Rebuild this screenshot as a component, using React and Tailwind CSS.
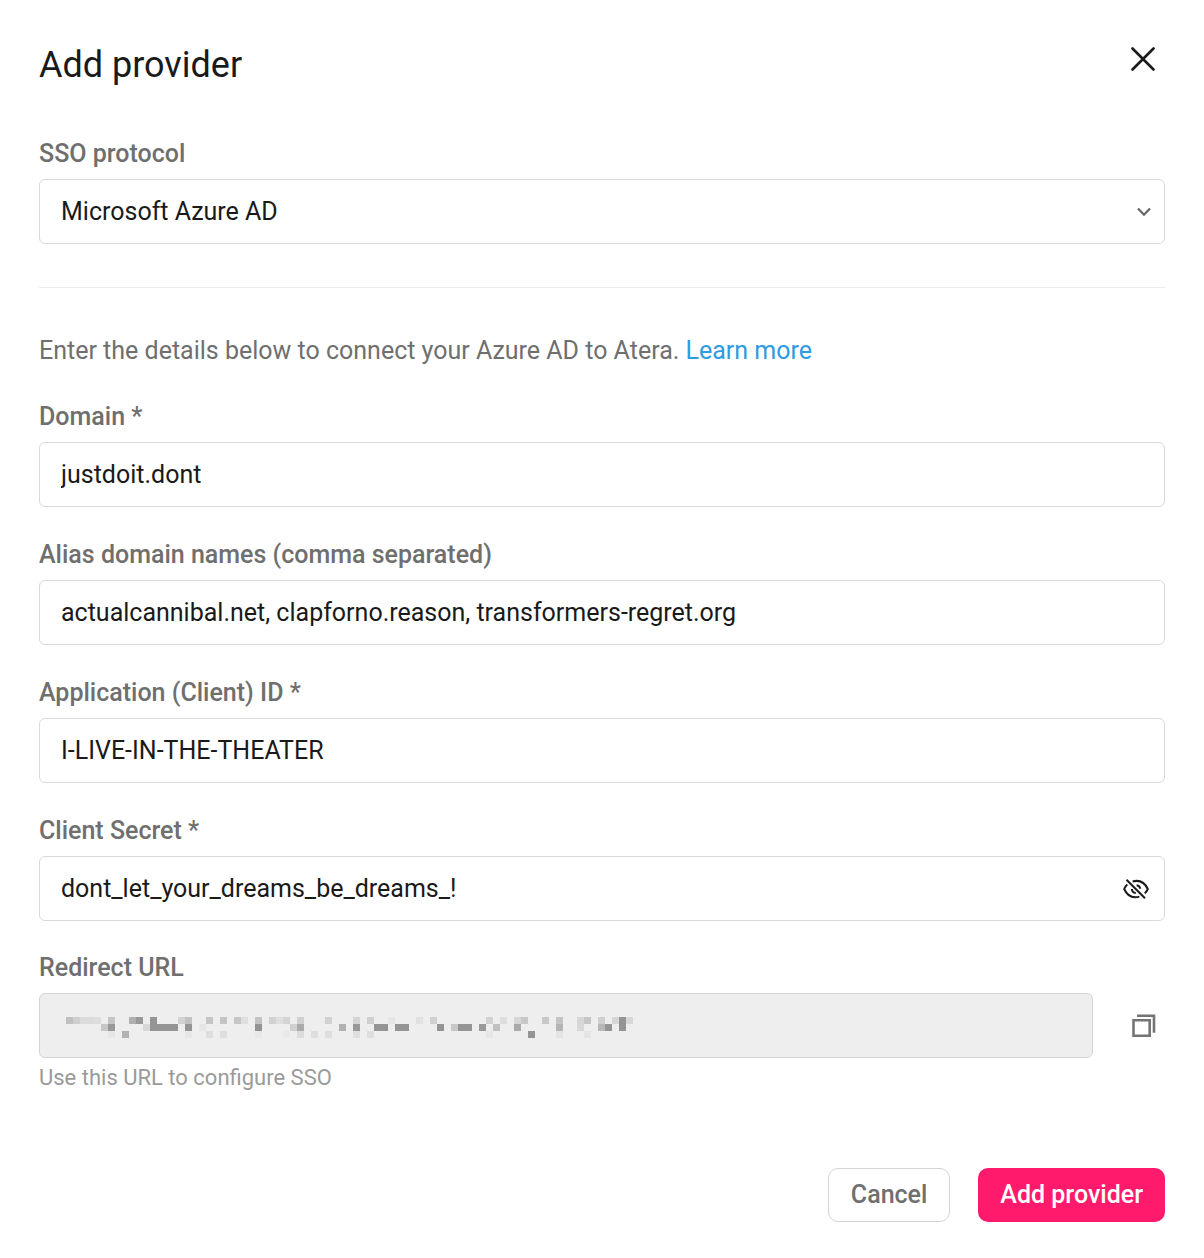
import { useState } from 'react';

const inputClass =
  'block h-[65px] w-full rounded-md border border-[#d9d9d9] bg-white px-[21px] text-[25px] text-[#1a1a1a] outline-none';

// Redacted value: [column, row, span, color], one cell is 7px
const MASK = [
  [0, 0, 1, '#c0c0c0'], [1, 0, 1, '#cfcfcf'], [2, 0, 2, '#dbdbdb'], [4, 0, 1, '#dedede'],
  [6, 0, 1, '#c5c5c5'], [9, 0, 1, '#b0b0b0'], [10, 0, 1, '#999999'], [12, 0, 1, '#949494'],
  [16, 0, 1, '#d2d2d2'], [17, 0, 1, '#c1c1c1'], [20, 0, 1, '#c5c5c5'], [22, 0, 1, '#c4c4c4'],
  [24, 0, 1, '#c6c6c6'], [25, 0, 1, '#dedede'], [27, 0, 1, '#c4c4c4'], [29, 0, 1, '#d2d2d2'],
  [30, 0, 1, '#dedede'], [31, 0, 1, '#d4d4d4'], [33, 0, 1, '#d0d0d0'], [37, 0, 1, '#d2d2d2'],
  [41, 0, 1, '#d4d4d4'], [43, 0, 1, '#cfcfcf'], [46, 0, 1, '#e6e6e6'], [50, 0, 1, '#e2e2e2'],
  [52, 0, 1, '#d0d0d0'], [60, 0, 1, '#d2d2d2'], [62, 0, 1, '#dedede'], [64, 0, 1, '#d6d6d6'],
  [65, 0, 1, '#c8c8c8'], [68, 0, 1, '#c8c8c8'], [70, 0, 1, '#c4c4c4'], [73, 0, 1, '#d6d6d6'],
  [74, 0, 1, '#c6c6c6'], [76, 0, 1, '#cfcfcf'], [78, 0, 1, '#d6d6d6'], [79, 0, 1, '#949494'],
  [80, 0, 1, '#d8d8d8'],
  [5, 1, 1, '#c6c6c6'], [6, 1, 1, '#999999'], [11, 1, 1, '#d8d8d8'], [12, 1, 4, '#949494'],
  [17, 1, 1, '#949494'], [19, 1, 1, '#e6e6e6'], [27, 1, 1, '#949494'], [32, 1, 1, '#d0d0d0'],
  [33, 1, 1, '#aaaaaa'], [39, 1, 1, '#b0b0b0'], [41, 1, 1, '#999999'], [44, 1, 2, '#949494'],
  [47, 1, 2, '#949494'], [53, 1, 1, '#949494'], [55, 1, 1, '#c8c8c8'], [56, 1, 2, '#949494'],
  [59, 1, 1, '#999999'], [61, 1, 1, '#c0c0c0'], [64, 1, 1, '#aaaaaa'], [70, 1, 1, '#b4b4b4'],
  [73, 1, 1, '#d8d8d8'], [76, 1, 1, '#b8b8b8'], [77, 1, 1, '#949494'], [79, 1, 1, '#949494'],
  [6, 2, 1, '#e6e6e6'], [8, 2, 1, '#b2b2b2'], [17, 2, 1, '#e6e6e6'], [20, 2, 1, '#dedede'],
  [22, 2, 1, '#dedede'], [27, 2, 1, '#e8e8e8'], [31, 2, 1, '#e9e9e9'], [33, 2, 1, '#dcdcdc'],
  [35, 2, 1, '#dedede'], [37, 2, 1, '#dedede'], [41, 2, 1, '#dedede'], [43, 2, 1, '#dedede'],
  [60, 2, 1, '#e6e6e6'], [66, 2, 1, '#949494'], [70, 2, 1, '#e4e4e4'], [74, 2, 1, '#e4e4e4'],
];

function Field({ id, label, children }) {
  return (
    <div>
      <label htmlFor={id} className="mb-[9px] block text-[25px] leading-8 font-medium text-[#6f6f6f]">
        {label}
      </label>
      {children}
    </div>
  );
}

function TextField({ id, label, value }) {
  return (
    <Field id={id} label={label}>
      <input id={id} type="text" defaultValue={value} className={inputClass} />
    </Field>
  );
}

function CloseIcon() {
  return (
    <svg width="24" height="24" viewBox="0 0 24 24" fill="none" stroke="#1a1a1a" strokeWidth="2.6" strokeLinecap="round">
      <path d="M1.5 1.5 22.5 22.5M22.5 1.5 1.5 22.5" />
    </svg>
  );
}

function ChevronIcon() {
  return (
    <svg width="14" height="10" viewBox="0 0 14 10" fill="none" stroke="#666" strokeWidth="2.2">
      <path d="M1 1.5 7 7.7 13 1.5" />
    </svg>
  );
}

function EyeOffIcon() {
  return (
    <svg width="26" height="20" viewBox="0 0 26 20" fill="none" stroke="#1a1a1a" strokeWidth="2">
      <path d="M3.5 .8 22 19.2" />
      <path d="M9.6 2.5C16.5.6 21.7 3.4 24.8 10c-.8 1.8-1.8 3.2-3 4.4" />
      <path d="M4.3 5.4C2.9 6.6 1.9 8.2 1.2 10c3 6.7 8.7 9.4 15.2 7.6" />
      <path d="M13.6 6.2c2 .3 3.3 1.500 3.700 3.500" />
      <path d="M8.900 10c.1 2.300 1.600 3.800 3.900 4" />
    </svg>
  );
}

function CopyIcon() {
  return (
    <svg width="24" height="24" viewBox="0 0 24 24" fill="none" stroke="#747474" strokeWidth="2.6">
      <path d="M1.500 6.200h16.200v15.600H1.500z" />
      <path d="M5 1.700h17v17" />
    </svg>
  );
}

export default function App() {
  const [showSecret, setShowSecret] = useState(true);

  return (
    <main className="min-h-screen bg-white px-[39px] pt-10 pb-9 font-[Roboto,sans-serif]">
      <header className="flex items-start justify-between">
        <h1 className="text-[36px] leading-[50px] text-[#1a1a1a]">Add provider</h1>
        <button type="button" aria-label="Close" className="mr-[10px] mt-[7px]">
          <CloseIcon />
        </button>
      </header>

      <form onSubmit={(e) => e.preventDefault()}>
        <div className="mt-12 border-b border-[#ececec] pb-[43px]">
          <Field id="protocol" label="SSO protocol">
            <div className="relative">
              <select id="protocol" className={`${inputClass} appearance-none`}>
                <option>Microsoft Azure AD</option>
              </select>
              <span className="pointer-events-none absolute inset-y-0 right-[14px] flex items-center">
                <ChevronIcon />
              </span>
            </div>
          </Field>
        </div>

        <p className="mt-[47px] text-[25px] leading-8 text-[#6f6f6f]">
          Enter the details below to connect your Azure AD to Atera.{' '}
          <a href="#learn-more" className="text-[#2f9be0]">Learn more</a>
        </p>

        <div className="mt-[34px] flex flex-col gap-8">
          <TextField id="domain" label="Domain *" value="justdoit.dont" />
          <TextField
            id="aliases"
            label="Alias domain names (comma separated)"
            value="actualcannibal.net, clapforno.reason, transformers-regret.org"
          />
          <TextField id="client-id" label="Application (Client) ID *" value="I-LIVE-IN-THE-THEATER" />

          <Field id="secret" label="Client Secret *">
            <div className="relative">
              <input
                id="secret"
                type={showSecret ? 'text' : 'password'}
                defaultValue="dont_let_your_dreams_be_dreams_!"
                className={inputClass}
              />
              <button
                type="button"
                aria-label="Toggle client secret"
                onClick={() => setShowSecret(!showSecret)}
                className="absolute inset-y-0 right-4 flex items-center"
              >
                <EyeOffIcon />
              </button>
            </div>
          </Field>
        </div>

        <div className="mt-[31px]">
          <Field id="redirect" label="Redirect URL">
            <div className="flex items-center">
              <div className="relative flex-1">
                <input
                  id="redirect"
                  type="text"
                  readOnly
                  className="block h-[65px] w-full rounded-md border border-[#d4d4d4] bg-[#eeeeee] outline-none"
                />
                <svg
                  width="567"
                  height="21"
                  shapeRendering="crispEdges"
                  className="pointer-events-none absolute top-6 left-[27px]"
                  aria-hidden="true"
                >
                  {MASK.map(([col, row, span, fill]) => (
                    <rect key={`${col}-${row}`} x={col * 7} y={row * 7} width={span * 7} height="7" fill={fill} />
                  ))}
                </svg>
              </div>
              <button type="button" aria-label="Copy redirect URL" className="mr-[9px] ml-[39px]">
                <CopyIcon />
              </button>
            </div>
          </Field>
          <p className="mt-1 text-[22px] leading-8 text-[#9a9a9a]">Use this URL to configure SSO</p>
        </div>

        <footer className="mt-[74px] flex justify-end gap-7">
          <button
            type="button"
            className="h-[54px] rounded-[10px] border border-[#d4d4d4] bg-white px-[22px] text-[25px] font-medium text-[#6f6f6f]"
          >
            Cancel
          </button>
          <button type="submit" className="h-[54px] rounded-[10px] bg-[#ff1a6c] px-[22px] text-[25px] font-medium text-white">
            Add provider
          </button>
        </footer>
      </form>
    </main>
  );
}
